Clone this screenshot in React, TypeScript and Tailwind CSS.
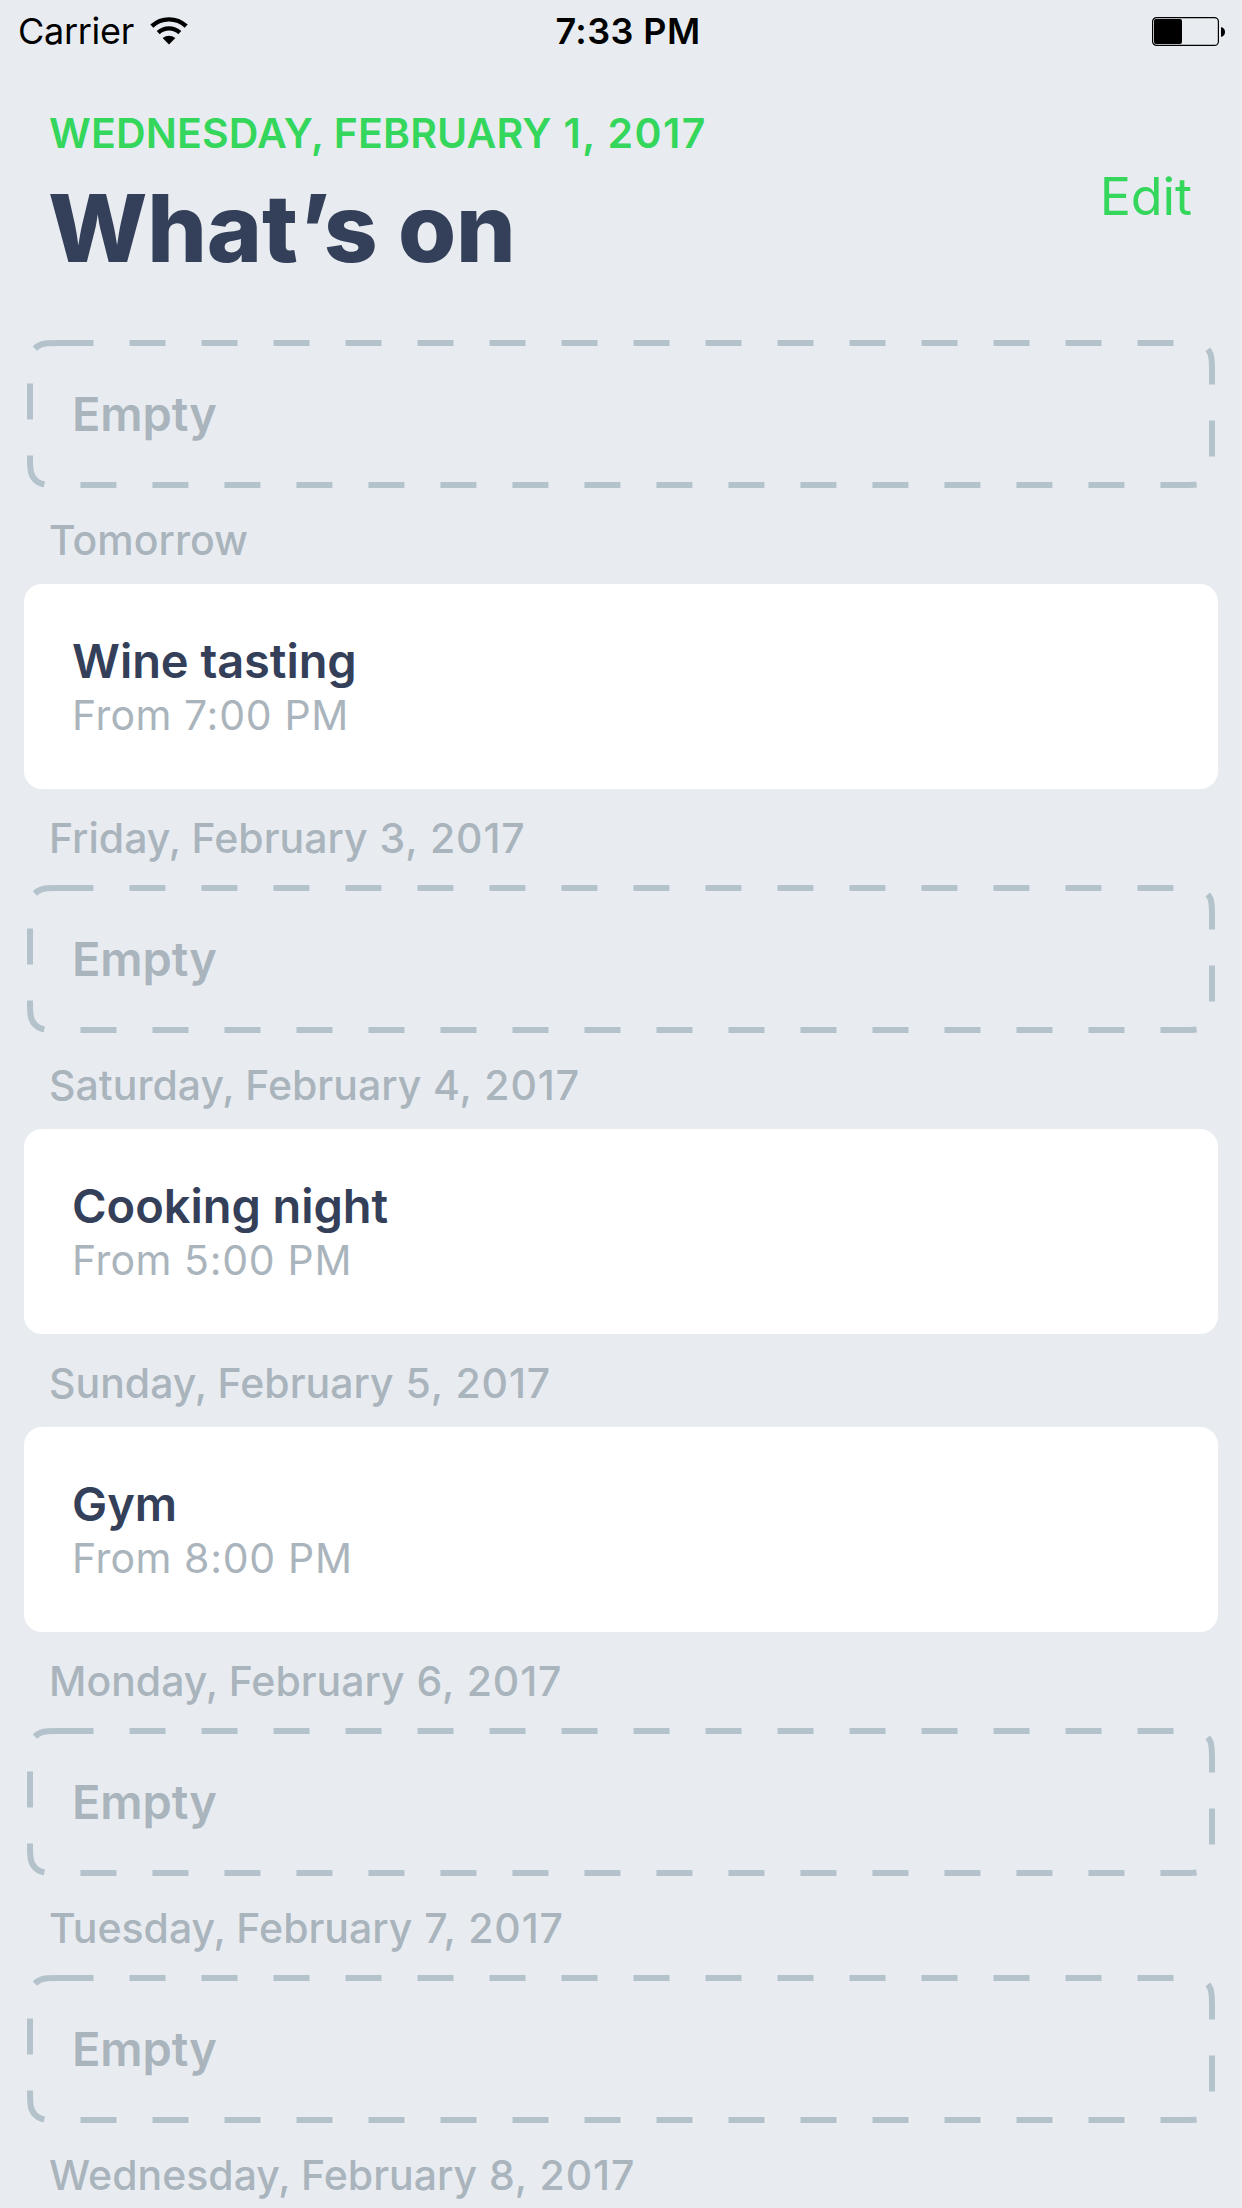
import React from "react";

type Item = { label?: string; day?: string; title?: string; time?: string };

const items: Item[] = [
  {},
  { label: "Tomorrow", title: "Wine tasting", time: "7:00 PM" },
  { label: "Friday, February", day: "3, 2017" },
  { label: "Saturday, February", day: "4, 2017", title: "Cooking night", time: "5:00 PM" },
  { label: "Sunday, February", day: "5, 2017", title: "Gym", time: "8:00 PM" },
  { label: "Monday, February", day: "6, 2017" },
  { label: "Tuesday, February", day: "7, 2017" },
];

// Rounded rectangle with continuous-curvature corners, drawn clockwise from the top left.
function smoothRect(x0: number, y0: number, x1: number, y1: number, r: number) {
  const a = 1.52866 * r, b = 1.08849 * r, c = 0.86841 * r, d = 0.63149 * r;
  const e = 0.07491 * r, f = 0.37282 * r, g = 0.16906 * r;
  return [
    `M${x0 + a} ${y0}L${x1 - a} ${y0}`,
    `C${x1 - b} ${y0} ${x1 - c} ${y0} ${x1 - d} ${y0 + e}`,
    `C${x1 - f} ${y0 + g} ${x1 - g} ${y0 + f} ${x1 - e} ${y0 + d}`,
    `C${x1} ${y0 + c} ${x1} ${y0 + b} ${x1} ${y0 + a}`,
    `L${x1} ${y1 - a}`,
    `C${x1} ${y1 - b} ${x1} ${y1 - c} ${x1 - e} ${y1 - d}`,
    `C${x1 - g} ${y1 - f} ${x1 - f} ${y1 - g} ${x1 - d} ${y1 - e}`,
    `C${x1 - c} ${y1} ${x1 - b} ${y1} ${x1 - a} ${y1}`,
    `L${x0 + a} ${y1}`,
    `C${x0 + b} ${y1} ${x0 + c} ${y1} ${x0 + d} ${y1 - e}`,
    `C${x0 + f} ${y1 - g} ${x0 + g} ${y1 - f} ${x0 + e} ${y1 - d}`,
    `C${x0} ${y1 - c} ${x0} ${y1 - b} ${x0} ${y1 - a}`,
    `L${x0} ${y0 + a}`,
    `C${x0} ${y0 + b} ${x0} ${y0 + c} ${x0 + e} ${y0 + d}`,
    `C${x0 + g} ${y0 + f} ${x0 + f} ${y0 + g} ${x0 + d} ${y0 + e}`,
    `C${x0 + c} ${y0} ${x0 + b} ${y0} ${x0 + a} ${y0}Z`,
  ].join("");
}

const outline = smoothRect(6, 6, 1188, 148, 18);

function DayLabel({ label, day }: Item) {
  return (
    <h2 className="h-[93px] pl-[49px] text-[41px] leading-[98px] font-medium text-[#aab4bc]">
      {label}
      {day && <span className="tracking-[0.9px]"> {day}</span>}
    </h2>
  );
}

function EmptySlot() {
  return (
    <div className="relative mx-6 flex h-[154px] items-center pl-[48px]">
      <svg className="absolute inset-0" width="1194" height="154" fill="none">
        <path d={outline} stroke="#b3c2cb" strokeWidth="6" strokeDasharray="36 36" />
      </svg>
      <span className="text-[47px] leading-[56px] font-semibold tracking-[-0.1px] text-[#aab4bc]">Empty</span>
    </div>
  );
}

function EventCard({ title, time }: Item) {
  return (
    <div className="mx-6 flex h-[205px] flex-col justify-center rounded-[18px] bg-white pl-[48px]">
      <span className="text-[47px] leading-[56px] font-semibold tracking-[-0.05px] text-[#344059]">{title}</span>
      <span className="text-[41px] leading-[52px] tracking-[0.4px] text-[#aab4bc]">
        From<span className="tracking-[0.7px]"> {time}</span>
      </span>
    </div>
  );
}

export default function App() {
  return (
    <div className="h-[2208px] w-[1242px] overflow-hidden bg-[#e8ecf1] font-['Inter',sans-serif]">
      <header className="grid h-[60px] grid-cols-3 items-center pt-px pr-[17px] pl-[18px] text-black">
        <div className="flex items-center gap-4">
          <span className="text-[36px] leading-[60px] tracking-[-0.3px]">Carrier</span>
          <svg width="38" height="28" viewBox="0 0 38 28" fill="none" stroke="#000" strokeWidth="4.4">
            <path d="M1.8 9.2A25 25 0 0 1 36.2 9.2" />
            <path d="M8.2 15.6A16 16 0 0 1 29.8 15.6" />
            <path d="M19 27.5L12.6 21Q19 16.4 25.4 21Z" fill="#000" stroke="none" />
          </svg>
        </div>
        <span className="pl-[13px] text-center text-[36px] leading-[60px] font-semibold tracking-[0.4px]">7:33 PM</span>
        <svg className="justify-self-end" width="73" height="29" viewBox="0 0 73 29">
          <rect x="0.6" y="0.6" width="65.8" height="27.8" rx="4" fill="none" stroke="#000" strokeWidth="1.2" />
          <rect x="2" y="2" width="28" height="25" rx="2" />
          <path d="M69 10q4 1 4 5t-4 5z" />
        </svg>
      </header>
      <div className="flex h-[277px] justify-between pt-[48px] pr-[50px] pl-[49px]">
        <div className="flex flex-col">
          <span className="text-[41px] leading-[50px] font-semibold tracking-[0.15px] text-[#35d65c]">
            WEDNESDAY, FEBRUARY<span className="tracking-[1.4px]"> 1, 2017</span>
          </span>
          <h1 className="mt-[10px] -ml-px text-[94px] leading-[120px] font-extrabold tracking-[-0.2px] text-[#344059]">
            What’s on
          </h1>
        </div>
        <span className="pt-[59px] text-[52px] leading-[60px] tracking-[-0.1px] text-[#35d65c]">Edit</span>
      </div>
      <main>
        {items.map((item, i) => (
          <section key={i}>
            {item.label && <DayLabel {...item} />}
            {item.title ? <EventCard {...item} /> : <EmptySlot />}
          </section>
        ))}
        <DayLabel label="Wednesday, February" day="8, 2017" />
      </main>
    </div>
  );
}
